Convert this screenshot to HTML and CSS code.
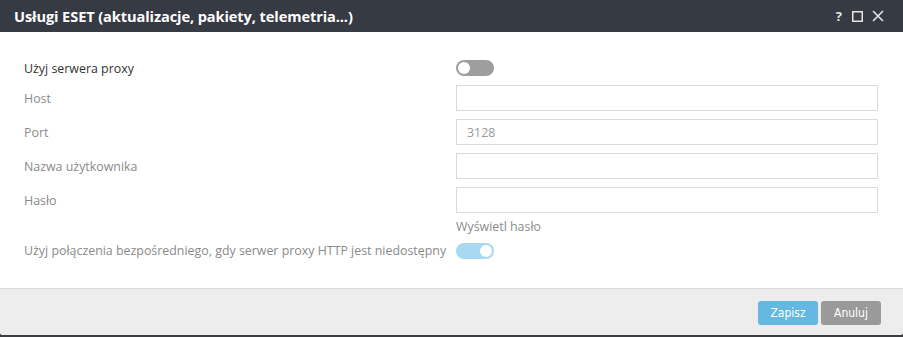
FILE: index.html
```html
<!DOCTYPE html>
<html>
<head>
  <title>Usługi ESET</title>
  <link rel="stylesheet" href="styles.css">
</head>
<body>

<div class="dialog">
  <div class="dialog-header">
    <h1>Usługi ESET (aktualizacje, pakiety, telemetria...)</h1>
    <div class="header-icons">
      <span class="help">?</span>
      <svg width="11" height="11" viewBox="0 0 11 11"><rect x="0.75" y="0.75" width="9.5" height="9.5" fill="none" stroke="#e6e6e6" stroke-width="1.5"/></svg>
      <svg width="12" height="12" viewBox="0 0 12 12"><path d="M1 1 L11 11 M11 1 L1 11" stroke="#e6e6e6" stroke-width="1.6"/></svg>
    </div>
  </div>

  <div class="dialog-body">
    <div class="row row-toggle">
      <label class="label dark">Użyj serwera proxy</label>
      <div class="control"><span class="toggle"></span></div>
    </div>
    <div class="row">
      <label class="label">Host</label>
      <div class="control"><input type="text" class="field"></div>
    </div>
    <div class="row">
      <label class="label">Port</label>
      <div class="control"><input type="text" class="field" value="3128"></div>
    </div>
    <div class="row">
      <label class="label">Nazwa użytkownika</label>
      <div class="control"><input type="text" class="field"></div>
    </div>
    <div class="row">
      <label class="label">Hasło</label>
      <div class="control"><input type="password" class="field"></div>
    </div>
    <div class="row row-hint">
      <span class="label"></span>
      <div class="control hint">Wyświetl hasło</div>
    </div>
    <div class="row row-toggle2">
      <label class="label">Użyj połączenia bezpośredniego, gdy serwer proxy HTTP jest niedostępny</label>
      <div class="control"><span class="toggle on"></span></div>
    </div>
  </div>

  <div class="dialog-footer">
    <button class="btn btn-save">Zapisz</button>
    <button class="btn btn-cancel">Anuluj</button>
  </div>
</div>

</body>
</html>
```

FILE: styles.css
```css
body {
  margin: 0;
  background: #3a3d42;
  font-family: "Open Sans", "Noto Sans", sans-serif;
  width: 903px;
  height: 337px;
  overflow: hidden;
}

.dialog {
  width: 903px;
  height: 335px;
  background: #fff;
  border-radius: 0 0 3px 3px;
  overflow: hidden;
  display: flex;
  flex-direction: column;
}

.dialog-header {
  height: 32px;
  background: #363a42;
  display: flex;
  align-items: center;
  justify-content: space-between;
  padding: 0 19px 0 14px;
  flex-shrink: 0;
}

.dialog-header h1 {
  margin: 0;
  font-size: 14.6px;
  font-weight: 700;
  color: #fff;
  letter-spacing: -0.1px;
}

.header-icons {
  display: flex;
  align-items: center;
  gap: 9px;
}

.help {
  color: #e6e6e6;
  font-size: 13px;
  font-weight: 700;
  margin-right: 1px;
}

.dialog-body {
  flex: 1;
  padding: 23px 25px 0 24px;
}

.row {
  display: flex;
  align-items: center;
  margin-bottom: 8px;
}

.row-toggle {
  height: 26px;
  margin-bottom: 4px;
}

.row-hint {
  margin-top: -3px;
  margin-bottom: 7px;
}

.label {
  width: 432px;
  flex-shrink: 0;
  font-size: 12.4px;
  color: #8a8a8a;
}

.label.dark {
  color: #333;
}

.control {
  flex: 1;
  display: flex;
}

.field {
  width: 100%;
  height: 26px;
  box-sizing: border-box;
  border: 1px solid #dadada;
  padding: 0 10px;
  font-family: inherit;
  font-size: 12.4px;
  color: #999;
  outline: none;
}

.hint {
  font-size: 12.4px;
  color: #8a8a8a;
}

.toggle {
  width: 38px;
  height: 16px;
  border-radius: 8px;
  background: #9e9e9e;
  position: relative;
}

.toggle::after {
  content: "";
  position: absolute;
  top: 2px;
  left: 2px;
  width: 12px;
  height: 12px;
  border-radius: 50%;
  background: #fff;
}

.toggle.on {
  background: #a9d9f2;
}

.toggle.on::after {
  left: auto;
  right: 2px;
}

.dialog-footer {
  height: 47px;
  box-sizing: border-box;
  background: #ededed;
  border-top: 1px solid #dcdcdc;
  display: flex;
  align-items: flex-start;
  justify-content: flex-end;
  gap: 3px;
  padding: 12px 22px 0 0;
  flex-shrink: 0;
}

.btn {
  height: 24px;
  border: none;
  border-radius: 3px;
  color: #fff;
  font-family: "DejaVu Sans Condensed", "Liberation Sans Narrow", sans-serif;
  font-stretch: condensed;
  font-size: 12px;
  padding: 0;
  width: 60px;
}

.btn-save {
  background: #65b8e1;
}

.btn-cancel {
  background: #9a9a9a;
}
```
